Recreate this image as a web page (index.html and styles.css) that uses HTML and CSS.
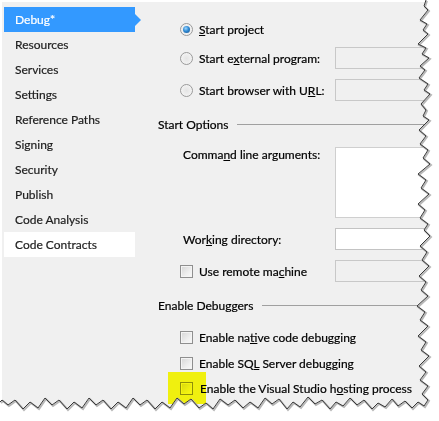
FILE: index.html
```html
<!DOCTYPE html>
<html>
<head>
<meta charset="utf-8">
<link rel="stylesheet" href="styles.css">
</head>
<body>
<div class="window">
  <nav class="nav">
    <div class="nav-item selected">Debug*</div>
    <div class="nav-item">Resources</div>
    <div class="nav-item">Services</div>
    <div class="nav-item">Settings</div>
    <div class="nav-item">Reference Paths</div>
    <div class="nav-item">Signing</div>
    <div class="nav-item">Security</div>
    <div class="nav-item">Publish</div>
    <div class="nav-item">Code Analysis</div>
    <div class="nav-item current">Code Contracts</div>
  </nav>
  <main class="content">
    <div class="row r1">
      <div class="opt"><span class="radio checked"></span><span><u>S</u>tart project</span></div>
    </div>
    <div class="row r2">
      <div class="opt"><span class="radio"></span><span>Start e<u>x</u>ternal program:</span></div>
      <div class="field disabled"></div>
    </div>
    <div class="row r3">
      <div class="opt"><span class="radio"></span><span>Start browser with U<u>R</u>L:</span></div>
      <div class="field disabled"></div>
    </div>
    <div class="section s1"><span>Start Options</span></div>
    <div class="row area-row">
      <div class="lbl">Comma<u>n</u>d line arguments:</div>
      <div class="field area"></div>
    </div>
    <div class="row r-wd">
      <div class="lbl">Wor<u>k</u>ing directory:</div>
      <div class="field"></div>
    </div>
    <div class="row r-rm">
      <div class="opt"><span class="check"></span><span>Use remote ma<u>c</u>hine</span></div>
      <div class="field disabled"></div>
    </div>
    <div class="section s2"><span>Enable Debuggers</span></div>
    <div class="row c1">
      <div class="opt"><span class="check"></span><span>Enable na<u>t</u>ive code debugging</span></div>
    </div>
    <div class="row c2">
      <div class="opt"><span class="check"></span><span>Enable SQ<u>L</u> Server debugging</span></div>
    </div>
    <div class="row c3">
      <div class="opt"><span class="check"></span><span>Enable the Visual Studio h<u>o</u>sting process</span></div>
    </div>
  </main>
</div>
<div class="highlight"></div>
<svg class="torn" width="439" height="421" viewBox="0 0 439 421">
  <path class="paper" d="M439,0 L426,0 L424,6 L428,10 L420,20 L427,24 L423,30 L428,34 L418,44 L426,48 L422,54 L429,58 L420,66 L425,70 L419,78 L428,84 L424,90 L430,94 L421,104 L426,110 L423,116 L429,120 L419,130 L426,136 L420,144 L428,150 L423,158 L430,164 L418,174 L426,180 L421,188 L429,194 L418,204 L425,210 L420,218 L428,224 L424,230 L430,236 L420,246 L427,252 L422,260 L429,266 L419,276 L426,282 L421,290 L428,296 L417,306 L425,312 L420,320 L428,326 L418,336 L426,342 L421,350 L429,356 L419,366 L426,372 L420,380 L428,386 L422,394 L428,400 L424,406 L418,402 L412,408 L405,401 L398,406 L392,399 L385,407 L378,403 L372,409 L364,400 L357,405 L350,398 L343,406 L336,402 L330,409 L322,400 L315,404 L308,397 L300,407 L293,402 L287,409 L279,399 L272,404 L265,398 L258,408 L250,402 L243,408 L235,400 L228,405 L220,399 L213,409 L206,403 L199,408 L191,399 L184,404 L177,398 L170,408 L162,402 L155,409 L147,400 L140,405 L133,398 L126,408 L118,402 L111,409 L103,400 L96,405 L89,398 L82,408 L74,402 L67,409 L59,400 L52,405 L45,398 L38,408 L30,402 L23,409 L15,400 L8,405 L2,400 L0,402 L0,421 L439,421 Z"/>
  <path class="shadow" d="M426,0 L424,6 L428,10 L420,20 L427,24 L423,30 L428,34 L418,44 L426,48 L422,54 L429,58 L420,66 L425,70 L419,78 L428,84 L424,90 L430,94 L421,104 L426,110 L423,116 L429,120 L419,130 L426,136 L420,144 L428,150 L423,158 L430,164 L418,174 L426,180 L421,188 L429,194 L418,204 L425,210 L420,218 L428,224 L424,230 L430,236 L420,246 L427,252 L422,260 L429,266 L419,276 L426,282 L421,290 L428,296 L417,306 L425,312 L420,320 L428,326 L418,336 L426,342 L421,350 L429,356 L419,366 L426,372 L420,380 L428,386 L422,394 L428,400 L424,406 L418,402 L412,408 L405,401 L398,406 L392,399 L385,407 L378,403 L372,409 L364,400 L357,405 L350,398 L343,406 L336,402 L330,409 L322,400 L315,404 L308,397 L300,407 L293,402 L287,409 L279,399 L272,404 L265,398 L258,408 L250,402 L243,408 L235,400 L228,405 L220,399 L213,409 L206,403 L199,408 L191,399 L184,404 L177,398 L170,408 L162,402 L155,409 L147,400 L140,405 L133,398 L126,408 L118,402 L111,409 L103,400 L96,405 L89,398 L82,408 L74,402 L67,409 L59,400 L52,405 L45,398 L38,408 L30,402 L23,409 L15,400 L8,405 L2,400 L0,402"/>
  <path class="edge" d="M426,0 L424,6 L428,10 L420,20 L427,24 L423,30 L428,34 L418,44 L426,48 L422,54 L429,58 L420,66 L425,70 L419,78 L428,84 L424,90 L430,94 L421,104 L426,110 L423,116 L429,120 L419,130 L426,136 L420,144 L428,150 L423,158 L430,164 L418,174 L426,180 L421,188 L429,194 L418,204 L425,210 L420,218 L428,224 L424,230 L430,236 L420,246 L427,252 L422,260 L429,266 L419,276 L426,282 L421,290 L428,296 L417,306 L425,312 L420,320 L428,326 L418,336 L426,342 L421,350 L429,356 L419,366 L426,372 L420,380 L428,386 L422,394 L428,400 L424,406 L418,402 L412,408 L405,401 L398,406 L392,399 L385,407 L378,403 L372,409 L364,400 L357,405 L350,398 L343,406 L336,402 L330,409 L322,400 L315,404 L308,397 L300,407 L293,402 L287,409 L279,399 L272,404 L265,398 L258,408 L250,402 L243,408 L235,400 L228,405 L220,399 L213,409 L206,403 L199,408 L191,399 L184,404 L177,398 L170,408 L162,402 L155,409 L147,400 L140,405 L133,398 L126,408 L118,402 L111,409 L103,400 L96,405 L89,398 L82,408 L74,402 L67,409 L59,400 L52,405 L45,398 L38,408 L30,402 L23,409 L15,400 L8,405 L2,400 L0,402"/>
</svg>
</body>
</html>
```

FILE: styles.css
```css
html, body {
  margin: 0;
  padding: 0;
  background: #ffffff;
}
body {
  position: relative;
  display: flow-root;
  width: 439px;
  height: 421px;
  overflow: hidden;
  font-family: Lato, "Noto Sans", sans-serif;
  font-size: 12px;
  color: #000000;
  -webkit-text-stroke: 0.2px currentColor;
}
.window {
  margin: 2px 0 0 2px;
  height: 419px;
  background: #f0f0f0;
  display: flex;
}
.nav {
  width: 131px;
  padding: 5px 0 0 2px;
  display: flex;
  flex-direction: column;
}
.nav-item {
  height: 25px;
  line-height: 25px;
  padding-left: 11px;
  position: relative;
  color: #1e1e1e;
}
.nav-item.selected {
  background: #3399ff;
  color: #ffffff;
}
.nav-item.selected::after {
  content: "";
  position: absolute;
  right: -6px;
  top: 7px;
  border-left: 6px solid #3399ff;
  border-top: 6px solid transparent;
  border-bottom: 6px solid transparent;
}
.nav-item.current {
  background: #ffffff;
}
.content {
  flex: 1;
  padding: 16px 0 0 23px;
  display: flex;
  flex-direction: column;
}
.row {
  display: grid;
  grid-template-columns: 177px 100px;
  align-items: center;
  height: 22px;
}
.opt {
  display: flex;
  align-items: center;
  padding-left: 22px;
  gap: 6px;
  white-space: nowrap;
}
.lbl {
  padding-left: 25px;
  white-space: nowrap;
}
.r2 { margin-top: 7px; }
.r3 { margin-top: 10px; }
.s1 { margin-top: 13px; }
.area-row { margin-top: 13px; height: 71px; align-items: start; }
.area-row .lbl { line-height: 16px; }
.r-wd { margin-top: 10px; }
.r-rm { margin-top: 10px; }
.s2 { margin-top: 13px; }
.c1 { margin-top: 11px; }
.c2 { margin-top: 4px; }
.c3 { margin-top: 3px; }

.field {
  box-sizing: border-box;
  height: 22px;
  border: 1px solid #c3c3c3;
  background: #ffffff;
}
.field.disabled {
  background: #f0f0f0;
  border-color: #c8c8c8;
}
.field.area {
  height: 71px;
  border-color: #cfcfcf;
}
.section {
  height: 20px;
  display: flex;
  align-items: center;
  gap: 9px;
}
.section::after {
  content: "";
  flex: 1;
  height: 1px;
  background: #a0a0a0;
}
.radio {
  box-sizing: border-box;
  width: 13px;
  height: 13px;
  border-radius: 50%;
  border: 1px solid #9a9a9a;
  background: radial-gradient(circle at 50% 50%, #e4e4e4 0%, #f0f0f0 60%, #fcfcfc 100%);
  flex: none;
  position: relative;
}
.radio.checked::after {
  content: "";
  position: absolute;
  left: 2px;
  top: 2px;
  width: 7px;
  height: 7px;
  border-radius: 50%;
  background: radial-gradient(circle at 40% 35%, #9fd6ff 0%, #2f8bd4 45%, #1a4f8a 100%);
}
.check {
  box-sizing: border-box;
  width: 13px;
  height: 13px;
  border: 1px solid #8f8f8f;
  background: linear-gradient(135deg, #d6d6d6 0%, #eeeeee 60%, #fafafa 100%);
  box-shadow: inset 0 0 0 1px #f4f4f4;
  flex: none;
}
.c3 .opt { gap: 7px; }
.highlight {
  position: absolute;
  left: 168px;
  top: 372px;
  width: 38px;
  height: 32px;
  background: #ffff10;
  mix-blend-mode: multiply;
}
.torn {
  position: absolute;
  left: 0;
  top: 0;
  pointer-events: none;
}
.torn .paper { fill: #ffffff; }
.torn .shadow {
  fill: none;
  stroke: #b8b8b8;
  stroke-width: 2;
  transform: translate(1px, 1px);
}
.torn .edge {
  fill: none;
  stroke: #3a3a3a;
  stroke-width: 1;
}
```
